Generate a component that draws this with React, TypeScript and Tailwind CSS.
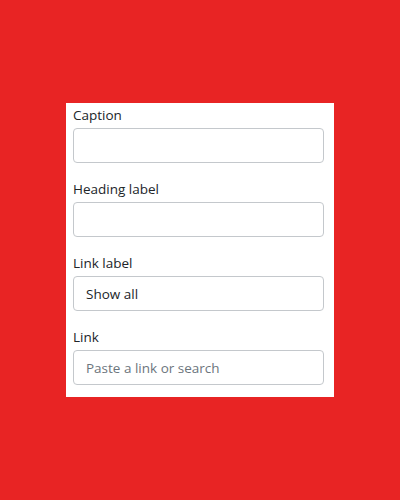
export default function App() {
  const fields = [
    { label: "Caption", value: "", placeholder: "" },
    { label: "Heading label", value: "", placeholder: "" },
    { label: "Link label", value: "Show all", placeholder: "" },
    { label: "Link", value: "", placeholder: "Paste a link or search" },
  ];

  return (
    <div className="flex min-h-screen items-center justify-center bg-[#e82424] font-['Open_Sans',sans-serif]">
      <div className="flex w-[268px] flex-col gap-[14px] bg-white pb-[12px] pl-[7px] pr-[10px] text-[13.5px] leading-[21px] text-[#212529]">
        {fields.map((field) => (
          <div key={field.label} className="flex flex-col">
            <label className="mb-[2px] pt-[2px]">{field.label}</label>
            <input
              type="text"
              defaultValue={field.value}
              placeholder={field.placeholder}
              className="h-[35px] w-full rounded-[4px] border border-[#c4c8cc] bg-white px-[12px] py-[6px] text-[13.5px] text-[#212529] outline-none placeholder:text-[#6c757d]"
            />
          </div>
        ))}
      </div>
    </div>
  );
}
